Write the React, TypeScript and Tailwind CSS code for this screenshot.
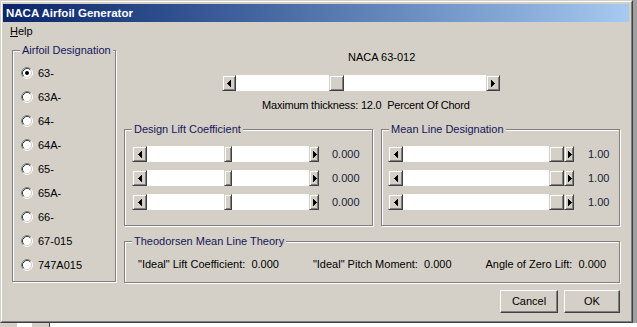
import React from 'react'

// classic win9x-ish dialog, all flow layout

function Arrow({ dir }: { dir: 'left' | 'right' }) {
  // 4x7 pixel triangle
  const cols = dir === 'left' ? [1, 3, 5, 7] : [7, 5, 3, 1]
  return (
    <svg width="4" height="7" viewBox="0 0 4 7" shapeRendering="crispEdges" className="block">
      {cols.map((h, i) => (
        <rect key={i} x={i} y={(7 - h) / 2} width="1" height={h} fill="#000" />
      ))}
    </svg>
  )
}

function ScrollButton({ dir, className }: { dir: 'left' | 'right'; className: string }) {
  return (
    <div
      className={`flex h-full shrink-0 items-center border border-t-[#d4d0c8] border-l-[#d4d0c8] border-r-[#404040] border-b-[#404040] bg-[#d4d0c8] shadow-[inset_1px_1px_0_#fff,inset_-1px_-1px_0_#808080] ${className}`}
    >
      <Arrow dir={dir} />
    </div>
  )
}

function Thumb({ className }: { className: string }) {
  return (
    <div
      className={`h-full shrink-0 border border-t-[#d4d0c8] border-l-[#d4d0c8] border-r-[#404040] border-b-[#404040] bg-[#d4d0c8] shadow-[inset_1px_1px_0_#fff,inset_-1px_-1px_0_#808080] ${className}`}
    />
  )
}

function Radio({ checked }: { checked?: boolean }) {
  return (
    <svg width="12" height="12" viewBox="0 0 12 12" className="block shrink-0">
      <circle cx="6" cy="6" r="4.5" fill="#fff" />
      <path d="M2.11 9.89A5.5 5.5 0 0 1 9.89 2.11" fill="none" stroke="#808080" />
      <path d="M9.89 2.11A5.5 5.5 0 0 1 2.11 9.89" fill="none" stroke="#fff" />
      <path d="M2.82 9.18A4.5 4.5 0 0 1 9.18 2.82" fill="none" stroke="#404040" />
      <path d="M9.18 2.82A4.5 4.5 0 0 1 2.82 9.18" fill="none" stroke="#d4d0c8" />
      {checked && <circle cx="6" cy="6" r="2" fill="#000" />}
    </svg>
  )
}

function GroupBox({ title, className, children }: { title: string; className: string; children?: React.ReactNode }) {
  return (
    <div className={`relative border border-[#808080] shadow-[1px_1px_0_#fff,inset_1px_1px_0_#fff] ${className}`}>
      <span className="absolute -top-[7px] left-[7px] bg-[#d4d0c8] px-[2px] leading-[13px] whitespace-nowrap text-[#15155a]">
        {title}
      </span>
      {children}
    </div>
  )
}

function Button({ label, className }: { label: string; className: string }) {
  return (
    <div
      className={`flex h-[23px] items-center justify-center border border-t-white border-l-white border-r-[#404040] border-b-[#404040] bg-[#d4d0c8] shadow-[inset_-1px_-1px_0_#808080] ${className}`}
    >
      {label}
    </div>
  )
}

const designations = ['63-', '63A-', '64-', '64A-', '65-', '65A-', '66-', '67-015', '747A015']

export default function App() {
  return (
    <div className="flex h-[327px] w-[637px] flex-col overflow-hidden bg-white font-['Liberation_Sans',Arial,sans-serif] text-[11px] leading-[13px] text-black">
      <div className="flex h-[323px] shrink-0">
        {/* --- window frame --- */}
        <div className="flex h-[323px] w-[633px] shrink-0 flex-col border border-t-[#d4d0c8] border-l-[#d4d0c8] border-r-[#404040] border-b-[#404040] bg-[#d4d0c8]">
          <div className="flex flex-1 flex-col border border-t-white border-l-white border-r-[#808080] border-b-[#808080] pt-[2px] pr-[2px] pl-[1px]">
            {/* title bar */}
            <div className="flex h-[18px] shrink-0 items-center bg-linear-to-r from-[#0a246a] to-[#a6caf0] pl-[3px] text-[11.5px] font-bold text-white">
              NACA Airfoil Generator
            </div>

            {/* menu */}
            <div className="flex h-[19px] shrink-0 items-center pl-[7px]">
              <span>
                <span className="underline">H</span>elp
              </span>
            </div>

            {/* body */}
            <div className="flex flex-1 pl-[9px]">
              <GroupBox title="Airfoil Designation" className="mt-[9px] h-[232px] w-[104px] shrink-0">
                <div className="flex flex-col pt-[10px] pl-[8px]">
                  {designations.map((d, i) => (
                    <div key={d} className="flex h-[24px] items-center gap-[5px]">
                      <Radio checked={i === 0} />
                      <span>{d}</span>
                    </div>
                  ))}
                </div>
              </GroupBox>

              <div className="ml-[8px] flex w-[496px] shrink-0 flex-col">
                <div className="mt-[10px] ml-[224px]">NACA 63-012</div>

                <div className="mt-[11px] ml-[98px] flex h-[16px] w-[278px]">
                  <ScrollButton dir="left" className="w-[14px] justify-center" />
                  <div className="w-[93px] bg-white" />
                  <Thumb className="w-[15px]" />
                  <div className="flex-1 bg-white" />
                  <ScrollButton dir="right" className="w-[14px] justify-center" />
                </div>

                <div className="mt-[8px] ml-[138px] tracking-[-0.2px] whitespace-pre">Maximum thickness: 12.0  Percent Of Chord</div>

                <div className="mt-[17px] flex gap-[8px]">
                  <GroupBox title="Design Lift Coefficient" className="h-[97px] w-[249px] shrink-0">
                    <div className="flex flex-col gap-[8px] pt-[16px] pl-[7px]">
                      {[0, 1, 2].map((r) => (
                        <div key={r} className="flex h-[16px] items-center">
                          <div className="flex h-[16px] w-[187px]">
                            <ScrollButton dir="left" className="w-[15px] justify-center" />
                            <div className="w-[77px] bg-white" />
                            <Thumb className="w-[8px]" />
                            <div className="flex-1 bg-white" />
                            <ScrollButton dir="right" className="w-[10px] pl-[3px]" />
                          </div>
                          <span className="ml-[13px] text-[#1a1a38]">0.000</span>
                        </div>
                      ))}
                    </div>
                  </GroupBox>

                  <GroupBox title="Mean Line Designation" className="h-[97px] w-[239px] shrink-0">
                    <div className="flex flex-col gap-[8px] pt-[16px] pl-[6px]">
                      {[0, 1, 2].map((r) => (
                        <div key={r} className="flex h-[16px] items-center">
                          <div className="flex h-[16px] w-[186px]">
                            <ScrollButton dir="left" className="w-[15px] justify-center" />
                            <div className="flex-1 bg-white" />
                            <Thumb className="w-[15px]" />
                            <ScrollButton dir="right" className="w-[10px] pl-[3px]" />
                          </div>
                          <span className="ml-[14px] text-[#1a1a38]">1.00</span>
                        </div>
                      ))}
                    </div>
                  </GroupBox>
                </div>

                <GroupBox title="Theodorsen Mean Line Theory" className="mt-[15px] h-[42px] w-[496px] shrink-0">
                  <div className="flex justify-between px-[13px] pt-[16px] whitespace-pre">
                    <span>"Ideal" Lift Coefficient:  0.000</span>
                    <span>"Ideal" Pitch Moment:  0.000</span>
                    <span>Angle of Zero Lift:  0.000</span>
                  </div>
                </GroupBox>

                <div className="mt-[7px] flex justify-end gap-[6px]">
                  <Button label="Cancel" className="w-[58px]" />
                  <Button label="OK" className="w-[56px]" />
                </div>
              </div>
            </div>
          </div>
        </div>
        <div className="flex-1 bg-[#a0a0a0]" />
      </div>

      {/* bits of whatever is behind the dialog */}
      <div className="flex h-[4px] shrink-0">
        <div className="w-[17px] bg-[#d4d0c8]" />
        <div className="w-[15px] bg-white" />
        <div className="w-[18px] border-r border-[#404040] bg-[#d4d0c8]" />
        <div className="flex-1 bg-white" />
      </div>
    </div>
  )
}
